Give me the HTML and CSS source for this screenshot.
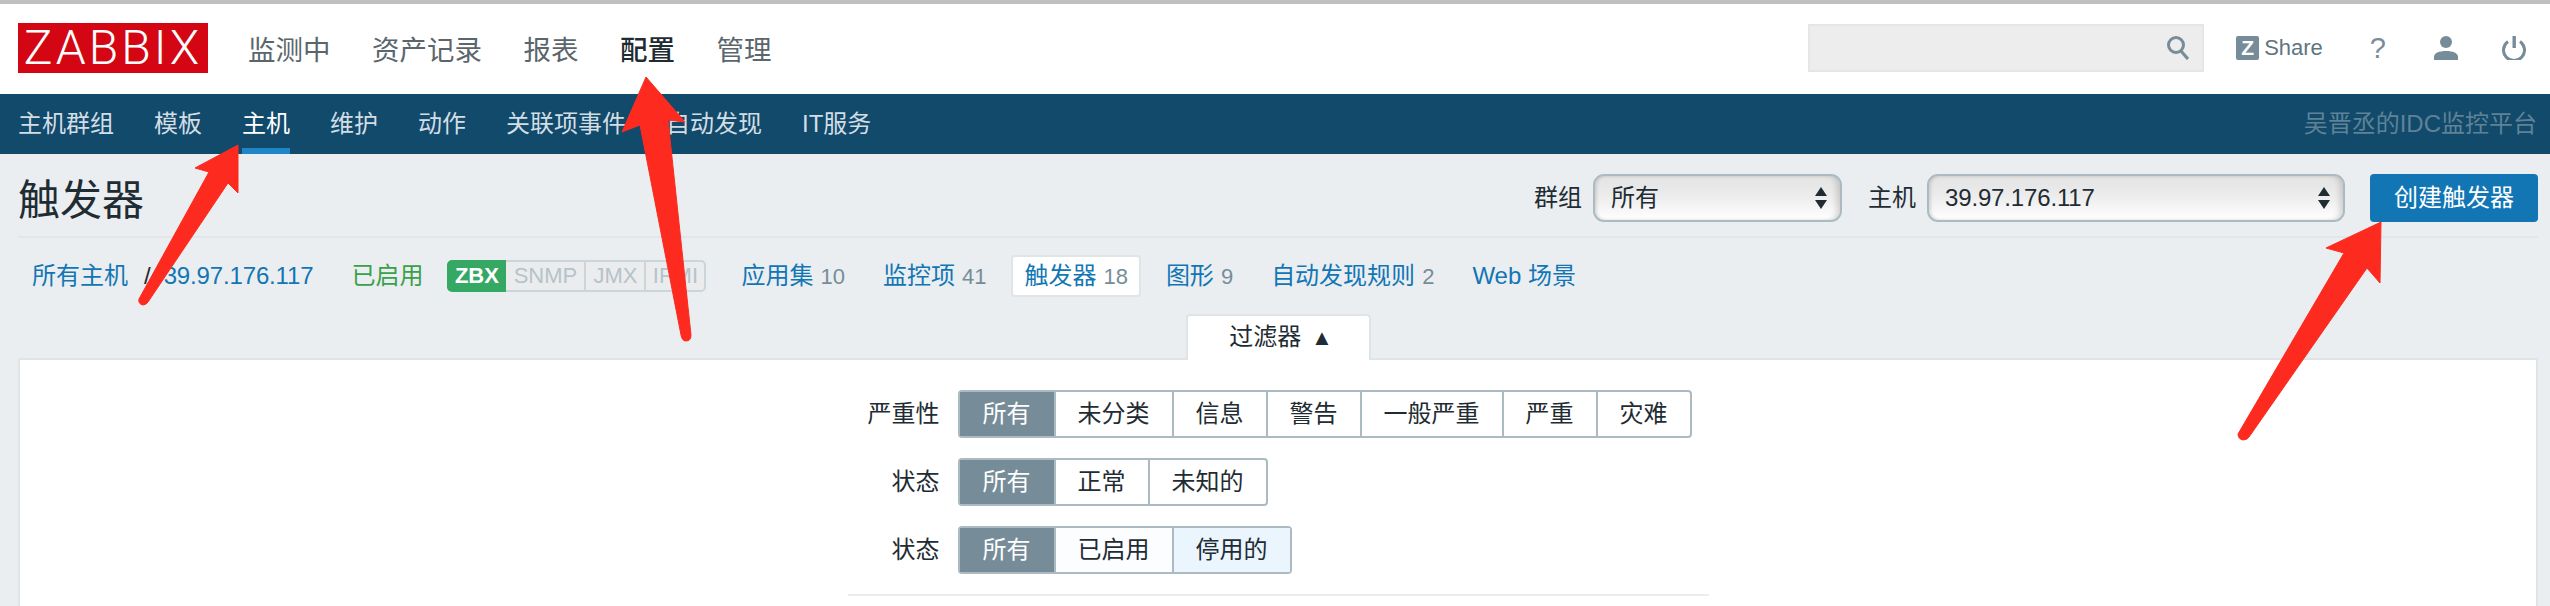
FILE: index.html
```html
<!DOCTYPE html>
<html lang="zh-CN">
<head>
<meta charset="utf-8">
<title>触发器</title>
<link rel="stylesheet" href="styles.css">
</head>
<body>
<header class="top">
  <div class="logo">ZABBIX</div>
  <nav class="mainnav">
    <a>监测中</a><a>资产记录</a><a>报表</a><a class="on">配置</a><a>管理</a>
  </nav>
  <div class="tools">
    <div class="search">
      <svg class="ic" width="26" height="24" viewBox="0 0 26 24"><circle cx="10" cy="9" r="7.5" fill="none" stroke="#768d99" stroke-width="3"/><path d="M15 15l7 8" stroke="#768d99" stroke-width="3.2"/></svg>
    </div>
    <a class="share"><span class="zbox">Z</span>Share</a>
    <a class="help">?</a>
    <svg class="ic user" width="24" height="24" viewBox="0 0 24 24"><circle cx="12" cy="6" r="6" fill="#768d99"/><path d="M0 24v-3c0-4 5-6 12-6s12 2 12 6v3z" fill="#768d99"/></svg>
    <svg class="ic power" width="24" height="24" viewBox="0 0 24 24"><path d="M6 5.5a10.5 10.5 0 1 0 12 0" fill="none" stroke="#768d99" stroke-width="3"/><rect x="10.5" y="0" width="3.4" height="12" fill="#768d99"/></svg>
  </div>
</header>
<nav class="subnav">
  <a>主机群组</a><a>模板</a><a class="on">主机</a><a>维护</a><a>动作</a><a>关联项事件</a><a>自动发现</a><a>IT服务</a>
  <span class="brand">吴晋丞的IDC监控平台</span>
</nav>
<main class="page">
  <div class="head">
    <h1>触发器</h1>
    <div class="controls">
      <label>群组</label>
      <div class="select s1"><span>所有</span><i class="updown"></i></div>
      <label>主机</label>
      <div class="select s2"><span class="ip">39.97.176.117</span><i class="updown"></i></div>
      <button class="create">创建触发器</button>
    </div>
  </div>
  <div class="crumbs">
    <a class="link">所有主机</a><span class="sep">/</span><a class="link ip">39.97.176.117</a>
    <span class="status">已启用</span>
    <div class="avail"><b class="ok">ZBX</b><b>SNMP</b><b>JMX</b><b>IPMI</b></div>
    <a class="link item w1">应用集<em>10</em></a>
    <a class="link item">监控项<em>41</em></a>
    <a class="link item current">触发器<em>18</em></a>
    <a class="link item">图形<em>9</em></a>
    <a class="link item">自动发现规则<em>2</em></a>
    <a class="link item">Web 场景</a>
  </div>
  <div class="tabrow"><div class="ftab">过滤器 <span class="tri">▲</span></div></div>
  <section class="panel">
    <div class="form">
      <div class="lab">严重性</div>
      <div class="seg"><a class="sel">所有</a><a>未分类</a><a>信息</a><a>警告</a><a>一般严重</a><a>严重</a><a>灾难</a></div>
      <div class="lab">状态</div>
      <div class="seg"><a class="sel">所有</a><a>正常</a><a>未知的</a></div>
      <div class="lab">状态</div>
      <div class="seg"><a class="sel">所有</a><a class="soft">已启用</a><a class="hover">停用的</a></div>
    </div>
  </section>
</main>
<svg class="arrows" width="2550" height="606" viewBox="0 0 2550 606">
  <g fill="#fd2b1f" stroke="#fd2b1f" stroke-width="1" stroke-linejoin="round">
    <path d="M238 145L195 168L209 172L139 299Q138 304 143 305Q146 305 148 302L228 183L238 193Z"/>
    <path d="M646 77L622 132L640 125L681 335Q682 341 686 341Q691 341 691 335L668 120L685 122Z"/>
    <path d="M2381 222L2326 248L2344 253L2238 434Q2238 439 2243 440Q2247 440 2249 437L2367 268L2380 283Z"/>
  </g>
</svg>
</body>
</html>
```
FILE: styles.css
```css
* { box-sizing: border-box; }
html, body { margin: 0; height: 100%; overflow: hidden; }
body {
  background: #ebeef0;
  color: #1f2c33;
  font: 24px/1.2 "Liberation Sans", "Noto Sans CJK SC", sans-serif;
}
a { display: block; }
.top {
  height: 94px;
  background: #fff;
  border-top: 4px solid #bfbfbf;
  display: flex;
  align-items: center;
  padding: 0 12px 0 18px;
}
.logo {
  width: 190px;
  height: 50px;
  background: #d40613;
  color: #fff;
  font: 300 48px/50px Roboto, "Liberation Sans", sans-serif;
  letter-spacing: 3px;
  text-align: center;
  margin-top: 1px;
  margin-bottom: 3px;
}
.mainnav { display: flex; gap: 41.5px; margin-left: 40px; font-size: 27.5px; color: #5a666c; margin-top: 2px; }
.mainnav .on { color: #1f2c33; font-weight: 500; }
.tools { margin-left: auto; display: flex; align-items: center; margin-bottom: 2px; }
.search {
  width: 396px;
  height: 48px;
  background: #ededed;
  border: 2px solid #e6e6e6;
  display: flex;
  align-items: center;
  justify-content: flex-end;
  padding-right: 10px;
}
.ic { display: block; }
.share { display: flex; align-items: center; margin-left: 32px; color: #5f7680; font-size: 22px; }
.zbox {
  width: 23px; height: 24px;
  background: #768d99;
  color: #fff;
  border-radius: 2px;
  font-weight: 700;
  font-size: 21px;
  line-height: 24px;
  text-align: center;
  margin-right: 5px;
}
.help { margin-left: 47px; color: #768d99; font-size: 29px; }
.user { margin-left: 48px; }
.power { margin-left: 44px; margin-right: 12px; }
.subnav {
  height: 60px;
  background: #114a6b;
  display: flex;
  align-items: center;
  gap: 40px;
  padding: 0 13px 0 18px;
  color: #d3dee4;
}
.subnav a { height: 60px; line-height: 60px; }
.subnav .on { color: #fff; border-bottom: 6px solid #1f85c6; }
.brand { margin-left: auto; color: #5f8296; }
.page { padding: 0 12px 0 18px; }
.head {
  height: 84px;
  border-bottom: 2px solid #e2e6e8;
  display: flex;
  justify-content: space-between;
  padding-top: 20px;
}
h1 { margin: 0; padding-top: 3px; font-weight: 400; font-size: 42px; line-height: 48px; }
.controls { display: flex; align-items: flex-start; line-height: 48px; }
.controls label { margin-right: 11px; }
.select {
  height: 48px;
  border: 2px solid #acbbc2;
  border-radius: 11px;
  background: linear-gradient(#e3e3e3, #ececec 45%, #fff);
  box-shadow: inset 2px 0 3px rgba(0,0,0,.12), inset -6px 0 6px -3px rgba(0,0,0,.16);
  display: flex;
  align-items: center;
  justify-content: space-between;
  padding: 0 13px 0 16px;
  line-height: 44px;
}
.s1 { width: 249px; margin-right: 26px; }
.s2 { width: 418px; margin-right: 25px; }
.updown { display: block; width: 12px; height: 22px; }
.updown::before, .updown::after {
  content: "";
  display: block;
  width: 0; height: 0;
  border-left: 6px solid transparent;
  border-right: 6px solid transparent;
}
.updown::before { border-bottom: 9px solid #1f2c33; margin-bottom: 4px; }
.updown::after { border-top: 9px solid #1f2c33; }
.create {
  width: 168px;
  height: 48px;
  border: 0;
  border-radius: 4px;
  background: #1276b5;
  color: #fff;
  font: inherit;
  padding: 0;
}
.ip { letter-spacing: -.15px; }
.crumbs { display: flex; align-items: center; height: 42px; margin-top: 17px; padding-left: 14px; }
.link { color: #1276b5; }
.sep { margin: 0 13px 0 16px; }
.status { color: #3ba04a; margin-left: 38px; }
.avail { display: flex; margin-left: 24px; font-size: 22px; height: 32px; line-height: 28px; }
.avail b {
  font-weight: 400;
  width: 60px;
  text-align: center;
  color: #b5c3ca;
  background: #ebeced;
  border: 2px solid #ccd5d9;
  border-left-width: 0;
}
.avail b:nth-child(2) { width: 80px; }
.avail b:last-child { border-radius: 0 5px 5px 0; }
.avail .ok { width: 59px; background: #35a863; border: 2px solid #35a863; color: #fff; border-radius: 5px 0 0 5px; font-weight: 700; }
.item { padding: 0 11px; height: 42px; line-height: 38px; border: 2px solid transparent; border-radius: 4px; margin-left: 12px; }
.w1 { margin-left: 22px; }
.item em { font-style: normal; font-size: 22px; color: #768d99; margin-left: 7px; }
.current { background: #fff; border-color: #dfe4e7; }
.tabrow { display: flex; justify-content: center; margin-top: 17px; }
.ftab {
  position: relative;
  z-index: 1;
  width: 185px;
  height: 46px;
  margin-bottom: -2px;
  padding-left: 6px;
  background: #fff;
  border: 2px solid #dfe4e7;
  border-bottom: 0;
  border-radius: 4px 4px 0 0;
  text-align: center;
  line-height: 42px;
}
.tri { font-size: 22px; margin-left: 3px; }
.panel { background: #fff; border: 2px solid #dfe4e7; height: 300px; }
.form {
  width: 861px;
  margin: 0 auto;
  padding: 30px 0 20px;
  border-bottom: 2px solid #ebeef0;
  display: grid;
  grid-template-columns: 92px 1fr;
  column-gap: 18px;
  row-gap: 20px;
  align-items: center;
}
.lab { text-align: right; }
.seg { display: flex; width: max-content; height: 48px; border: 2px solid #acbbc2; border-radius: 4px; line-height: 44px; }
.seg a { padding: 0 22px; border-left: 2px solid #acbbc2; }
.seg a:first-child { border-left: 0; }
.seg .sel { background: #768d99; color: #fff; width: 94px; padding: 0; text-align: center; }
.seg .soft { background: #fcfdff; }
.seg .hover { background: #eaf5fe; }
.arrows { position: absolute; left: 0; top: 0; pointer-events: none; }
```
